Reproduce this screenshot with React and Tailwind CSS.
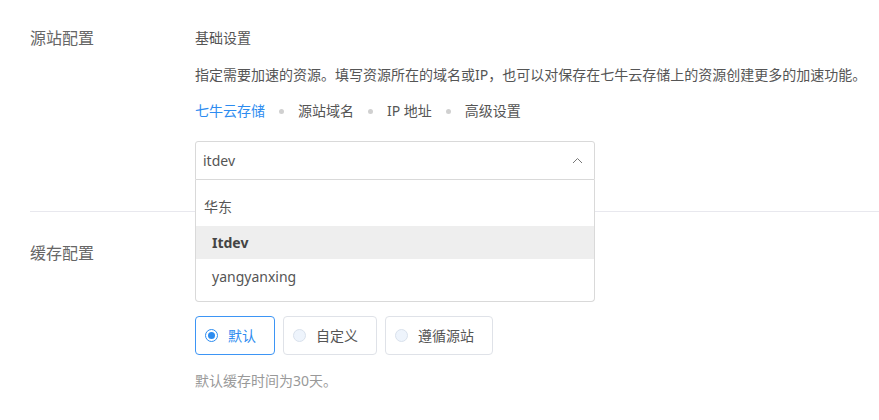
export default function App() {
  const font = "font-['Noto_Sans','Noto_Sans_CJK_SC',sans-serif]";
  return (
    <div className={`w-[879px] h-[420px] bg-white overflow-hidden ${font}`}>
      {/* Section 1 */}
      <div className="flex pl-[30px] pt-[28px] pb-[31px]">
        <div className="w-[165px] shrink-0 text-[16px] leading-[20px] text-[#666]">源站配置</div>
        <div className="flex-1">
          <div className="text-[14px] leading-[20px] text-[#555]">基础设置</div>
          <div className="mt-[17px] text-[14px] leading-[20px] text-[#555] whitespace-nowrap">
            指定需要加速的资源。填写资源所在的域名或IP，也可以对保存在七牛云存储上的资源创建更多的加速功能。
          </div>
          <div className="mt-[16px] flex items-center text-[14px] leading-[20px] text-[#555]">
            <span className="text-[#2d8cf0]">七牛云存储</span>
            <span className="mx-[14px] w-[5px] h-[5px] rounded-full bg-[#d0d0d0]" />
            <span>源站域名</span>
            <span className="mx-[14px] w-[5px] h-[5px] rounded-full bg-[#d0d0d0]" />
            <span>IP 地址</span>
            <span className="mx-[14px] w-[5px] h-[5px] rounded-full bg-[#d0d0d0]" />
            <span>高级设置</span>
          </div>
          <div className="relative mt-[20px] w-[400px]">
            <div className="h-[39px] border border-[#d9d9d9] rounded-t-[3px] flex items-center justify-between pl-[7px] pr-[11px]">
              <span className="text-[14px] text-[#555]">itdev</span>
              <svg width="11" height="7" viewBox="0 0 11 7" fill="none">
                <polyline points="1,6 5.5,1.5 10,6" stroke="#777" strokeWidth="1" />
              </svg>
            </div>
            <div className="absolute left-0 top-full z-10 w-[400px] h-[122px] bg-white border border-t-0 border-[#d9d9d9] rounded-b-[4px]">
              <div className="h-[46px] pt-[17px] pl-[8px] text-[14px] leading-[20px] text-[#555]">华东</div>
              <div className="h-[33px] bg-[#eeeeee] flex items-center pl-[16px] text-[14px] font-bold text-[#444]">Itdev</div>
              <div className="h-[34px] flex items-center pl-[16px] text-[14px] text-[#555]">yangyanxing</div>
            </div>
          </div>
        </div>
      </div>
      {/* Divider */}
      <div className="ml-[30px] h-px bg-[#e8e8ee]" />
      {/* Section 2 */}
      <div className="flex pl-[30px] pt-[31px]">
        <div className="w-[165px] shrink-0 text-[16px] leading-[20px] text-[#666]">缓存配置</div>
        <div className="flex-1">
          <div className="mt-[73px] flex gap-[8px]">
            <div className="h-[39px] border border-[#3d95f5] rounded-[4px] flex items-center pl-[9px] pr-[18px]">
              <span className="w-[13px] h-[13px] rounded-full border border-[#2d8cf0] flex items-center justify-center">
                <span className="w-[7px] h-[7px] rounded-full bg-[#2d8cf0]" />
              </span>
              <span className="ml-[10px] text-[14px] text-[#2d8cf0]">默认</span>
            </div>
            <div className="h-[39px] border border-[#dfe2e8] rounded-[4px] flex items-center pl-[9px] pr-[18px]">
              <span className="w-[13px] h-[13px] rounded-full border border-[#d9e1ec] bg-[#eef4fc]" />
              <span className="ml-[10px] text-[14px] text-[#555]">自定义</span>
            </div>
            <div className="h-[39px] border border-[#dfe2e8] rounded-[4px] flex items-center pl-[9px] pr-[18px]">
              <span className="w-[13px] h-[13px] rounded-full border border-[#d9e1ec] bg-[#eef4fc]" />
              <span className="ml-[10px] text-[14px] text-[#555]">遵循源站</span>
            </div>
          </div>
          <div className="mt-[16px] text-[14px] leading-[20px] text-[#999]">默认缓存时间为30天。</div>
        </div>
      </div>
    </div>
  );
}
